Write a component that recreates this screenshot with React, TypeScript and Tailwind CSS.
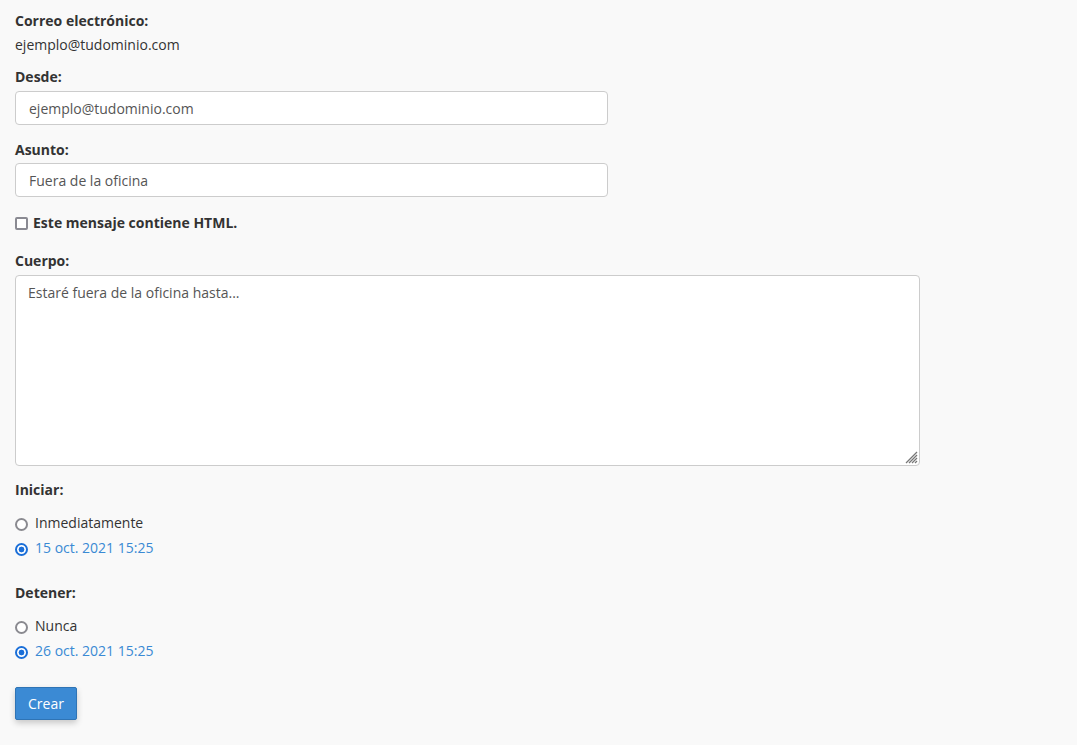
import React from 'react';

const label = 'block text-[14px] leading-5 font-bold text-[#333]';
const field =
    'block h-[34px] w-[593px] rounded-[4px] border border-[#cccccc] bg-white px-[13px] text-[14px] text-[#555] outline-none';
const radio =
    'm-0 mt-[2px] h-[13px] w-[13px] shrink-0 appearance-none rounded-full border-2 border-[#8a8a90] bg-white checked:border-[#1b6fd8] checked:bg-[radial-gradient(circle,#1b6fd8_0,#1b6fd8_2.6px,white_3.2px)]';

export default function App() {
    return (
        <div
            className="min-h-[745px] bg-[#f9f9f9] px-[15px] pt-[11px] text-[#333]"
            style={{ fontFamily: '"Open Sans", "Noto Sans", sans-serif' }}
        >
            <span className={label}>Correo electrónico:</span>
            <div className="mt-[4px] text-[14px] leading-5">ejemplo@tudominio.com</div>

            <label className={`${label} mt-[12px]`}>Desde:</label>
            <input className={`${field} mt-[4px]`} defaultValue="ejemplo@tudominio.com" />

            <label className={`${label} mt-[15px]`}>Asunto:</label>
            <input className={`${field} mt-[3px]`} defaultValue="Fuera de la oficina" />

            <label className="mt-[16px] flex items-center gap-[5px] text-[14px] leading-5 font-bold">
                <input
                    type="checkbox"
                    className="m-0 h-[13px] w-[13px] appearance-none rounded-[2px] border-2 border-[#8a8a92] bg-white"
                />
                Este mensaje contiene HTML.
            </label>

            <label className={`${label} mt-[18px]`}>Cuerpo:</label>
            <div className="relative mt-[4px] w-[905px]">
                <textarea
                    className="block h-[191px] w-full resize-none rounded-[4px] border border-[#cccccc] bg-white px-[12px] pt-[7px] text-[14px] leading-5 text-[#555] outline-none"
                    defaultValue="Estaré fuera de la oficina hasta..."
                />
                <svg className="absolute right-[2px] bottom-[2px]" width="13" height="13" viewBox="0 0 13 13">
                    <g stroke="#777" strokeWidth="1.2">
                        <line x1="1" y1="12" x2="12" y2="1" />
                        <line x1="4" y1="12" x2="12" y2="4" />
                        <line x1="7" y1="12" x2="12" y2="7" />
                        <line x1="10" y1="12" x2="12" y2="10" />
                    </g>
                </svg>
            </div>

            <span className={`${label} mt-[14px]`}>Iniciar:</span>
            <div className="mt-[13px] flex flex-col gap-[5px] text-[14px] leading-5">
                <label className="flex items-center gap-[7px]">
                    <input type="radio" name="start" className={radio} />
                    Inmediatamente
                </label>
                <label className="flex items-center gap-[7px] text-[#3a8ad4]">
                    <input type="radio" name="start" defaultChecked className={radio} />
                    15 oct. 2021 15:25
                </label>
            </div>

            <span className={`${label} mt-[25px]`}>Detener:</span>
            <div className="mt-[13px] flex flex-col gap-[5px] text-[14px] leading-5">
                <label className="flex items-center gap-[7px]">
                    <input type="radio" name="stop" className={radio} />
                    Nunca
                </label>
                <label className="flex items-center gap-[7px] text-[#3a8ad4]">
                    <input type="radio" name="stop" defaultChecked className={radio} />
                    26 oct. 2021 15:25
                </label>
            </div>

            <button className="mt-[26px] h-[33px] w-[62px] rounded-[2px] border border-[#2f74b5] bg-[#3b8ad4] text-[14px] text-white shadow-[0_3px_6px_rgba(0,0,0,0.2)]">
                Crear
            </button>
        </div>
    );
}
